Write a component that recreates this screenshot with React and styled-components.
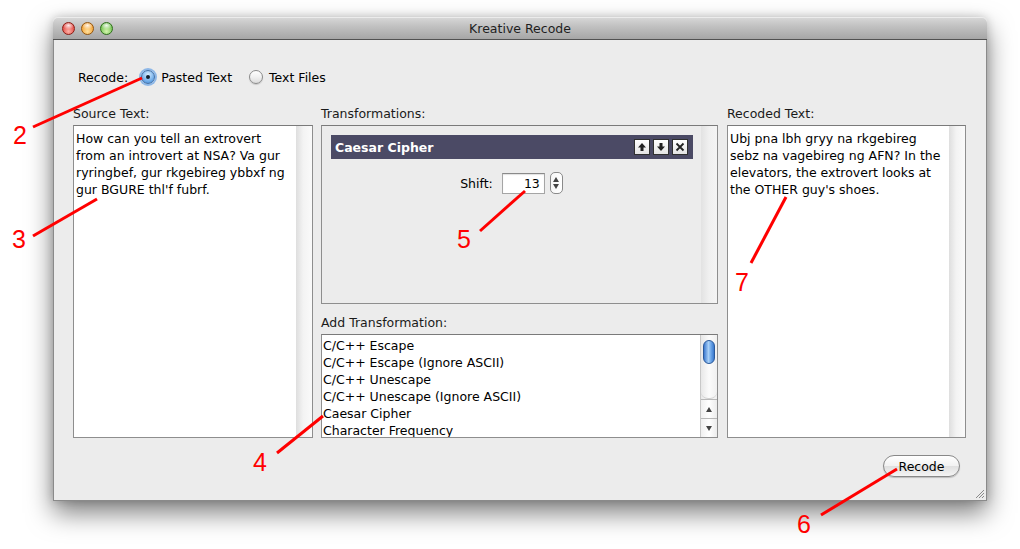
import React from 'react'
import styled, { createGlobalStyle } from 'styled-components'

const GlobalStyle = createGlobalStyle`
  html, body {
    margin: 0;
    padding: 0;
    background: #ffffff;
  }
  body {
    font-family: "DejaVu Sans", "Liberation Sans", sans-serif;
    font-size: 12.5px;
    color: #000;
  }
`

const Page = styled.div`
  position: relative;
  width: 1020px;
  height: 549px;
  overflow: hidden;
  padding: 17px 0 0 53px;
  box-sizing: border-box;
`

const Window = styled.div`
  width: 934px;
  height: 484px;
  display: flex;
  flex-direction: column;
  border-radius: 5px 5px 0 0;
  box-shadow: 0 12px 26px rgba(0, 0, 0, 0.5), 0 0 10px rgba(0, 0, 0, 0.18);
`

const TitleBar = styled.div`
  height: 22px;
  flex: none;
  display: flex;
  align-items: center;
  position: relative;
  border-radius: 5px 5px 0 0;
  background: linear-gradient(#d9d9d9, #c2c2c2 40%, #a6a6a6);
  border-bottom: 1px solid #515151;
  box-shadow: inset 0 1px 0 #ececec;
`

const Lights = styled.div`
  display: flex;
  gap: 6px;
  padding-left: 9px;
`

const lightColors = {
  red: ['#ffb3a8', '#e0443e', '#8c1d14'],
  yellow: ['#ffe1a0', '#f3a02f', '#93560f'],
  green: ['#d6f5b0', '#6cc04a', '#2f6e1c'],
}

const Light = styled.span`
  width: 13px;
  height: 13px;
  border-radius: 50%;
  box-sizing: border-box;
  border: 1px solid ${p => lightColors[p.$c][2]};
  background:
    radial-gradient(ellipse 6px 4px at 50% 22%, rgba(255,255,255,0.9), rgba(255,255,255,0) 100%),
    radial-gradient(circle at 50% 75%, ${p => lightColors[p.$c][0]}, ${p => lightColors[p.$c][1]} 70%);
`

const Title = styled.div`
  position: absolute;
  left: 0;
  right: 0;
  text-align: center;
  font-size: 12.5px;
  color: #1e1e1e;
  pointer-events: none;
`

const Body = styled.div`
  flex: 1;
  display: flex;
  flex-direction: column;
  position: relative;
  background: #ececec;
  border: 1px solid #8a8a8a;
  border-top: none;
  padding: 27px 20px 0 19px;
`

const RecodeRow = styled.div`
  display: flex;
  align-items: center;
  height: 20px;
  padding-left: 5px;
  margin-bottom: 19px;
`

const RowLabel = styled.span`
  margin-right: 13px;
`

const Radio = styled.span`
  width: 14px;
  height: 14px;
  box-sizing: border-box;
  border-radius: 50%;
  margin-right: 6px;
  display: inline-flex;
  align-items: center;
  justify-content: center;
  border: 1px solid ${p => (p.$checked ? '#3f6fa8' : '#8b8b8b')};
  background: ${p => (p.$checked
    ? 'radial-gradient(circle at 50% 30%, #d6ecff, #7fb6ec 55%, #3d86d6)'
    : 'linear-gradient(#ffffff, #f1f1f1 50%, #dcdcdc)')};
  box-shadow: ${p => (p.$checked ? '0 0 0 2px rgba(110, 165, 230, 0.75)' : '0 1px 1px rgba(0,0,0,0.15)')};
  &::after {
    content: '';
    display: ${p => (p.$checked ? 'block' : 'none')};
    width: 4px;
    height: 4px;
    border-radius: 50%;
    background: #102030;
  }
`

const RadioText = styled.span`
  margin-right: 17px;
`

const Columns = styled.div`
  display: grid;
  grid-template-columns: 240px 397px 1fr;
  column-gap: 8px;
`

const Column = styled.div`
  display: flex;
  flex-direction: column;
  margin-left: ${p => p.$shift || 0}px;
`

const Label = styled.div`
  height: 16px;
  line-height: 16px;
  margin-bottom: 3px;
  margin-top: ${p => p.$top || 0}px;
  color: #1a1a1a;
`

const Pane = styled.div`
  height: ${p => p.$h}px;
  box-sizing: border-box;
  border: 1px solid #8e8e8e;
  border-top-color: #7a7a7a;
  background: ${p => p.$bg || '#fff'};
  display: flex;
`

const PaneText = styled.div`
  flex: 1;
  padding: 4px 2px;
  line-height: 17px;
  white-space: pre-line;
  color: #000;
`

const ScrollTrack = styled.div`
  width: 16px;
  flex: none;
  background: ${p => (p.$gray
    ? 'linear-gradient(to right, #e2e2e2, #f0f0f0 50%, #f4f4f4)'
    : 'linear-gradient(to right, #dedede, #f3f3f3 45%, #fafafa)')};
`

const PanelArea = styled.div`
  flex: 1;
  display: flex;
  flex-direction: column;
`

const CipherHeader = styled.div`
  height: 24px;
  margin: 9px 8px 0 9px;
  background: #4b4a65;
  display: flex;
  align-items: center;
  justify-content: space-between;
  padding: 0 5px 0 4px;
`

const HeaderTitle = styled.span`
  color: #fff;
  font-weight: bold;
  font-size: 12.5px;
`

const HeaderButtons = styled.div`
  display: flex;
  gap: 3px;
`

const MiniButton = styled.span`
  width: 16px;
  height: 16px;
  box-sizing: border-box;
  border: 1px solid #303030;
  background: linear-gradient(#ffffff, #e4e4e4);
  display: inline-flex;
  align-items: center;
  justify-content: center;
`

const ShiftRow = styled.div`
  display: flex;
  align-items: center;
  justify-content: center;
  margin-top: 13px;
`

const ShiftInput = styled.div`
  width: 43px;
  height: 21px;
  box-sizing: border-box;
  margin-left: 9px;
  border: 1px solid #a5a5a5;
  border-top-color: #8a8a8a;
  background: #fff;
  box-shadow: inset 0 1px 1px rgba(0,0,0,0.12);
  text-align: right;
  padding-right: 4px;
  line-height: 19px;
`

const Stepper = styled.div`
  width: 13px;
  height: 22px;
  box-sizing: border-box;
  margin-left: 5px;
  border: 1px solid #8a8a8a;
  border-radius: 5px;
  background: linear-gradient(to right, #f7f7f7, #ffffff);
  display: flex;
  flex-direction: column;
  align-items: center;
  justify-content: space-around;
  padding: 3px 0;
`

const Tri = styled.span`
  width: 0;
  height: 0;
  border-left: 3px solid transparent;
  border-right: 3px solid transparent;
  ${p => (p.$down ? 'border-top: 5px solid #444;' : 'border-bottom: 5px solid #444;')}
`

const List = styled.div`
  flex: 1;
  padding: 2px 1px;
  line-height: 17px;
  overflow: hidden;
`

const ListItem = styled.div`
  white-space: nowrap;
  height: 17px;
`

const ListScroll = styled.div`
  width: 16px;
  flex: none;
  display: flex;
  flex-direction: column;
  border-left: 1px solid #c8c8c8;
  background: linear-gradient(to right, #e8e8e8, #fbfbfb 50%, #f0f0f0);
`

const ThumbTrack = styled.div`
  flex: 1;
  padding: 5px 2px 0 2px;
  border-radius: 0 0 7px 7px;
  border-bottom: 1px solid #d0d0d0;
`

const Thumb = styled.div`
  height: 22px;
  border-radius: 6px;
  border: 1px solid #2b5a9b;
  background: linear-gradient(to right, #3d7ad0, #a8d0f7 45%, #6ba5e8 70%, #3a78cd);
`

const ArrowBtn = styled.div`
  height: 18px;
  display: flex;
  align-items: center;
  justify-content: center;
  border-top: 1px solid #b8b8b8;
  background: linear-gradient(to right, #f0f0f0, #ffffff 50%, #ececec);
`

const Footer = styled.div`
  display: flex;
  justify-content: flex-end;
  padding-right: 6px;
  margin-top: 17px;
`

const RecodeButton = styled.button`
  width: 77px;
  height: 22px;
  border-radius: 11px;
  border: 1px solid #888;
  background: linear-gradient(#ffffff, #f2f2f2 50%, #e0e0e0 51%, #f4f4f4);
  box-shadow: 0 1px 1px rgba(0,0,0,0.2);
  font-family: "DejaVu Sans", "Liberation Sans", sans-serif;
  font-size: 12.5px;
  color: #000;
  padding: 0;
`

const Grip = styled.svg`
  position: absolute;
  right: 1px;
  bottom: 1px;
`

const Overlay = styled.svg`
  position: absolute;
  left: 0;
  top: 0;
  pointer-events: none;
`

const UpIcon = () => (
  <svg width="10" height="10" viewBox="0 0 10 10">
    <path d="M5 1 L9 5.5 L6.5 5.5 L6.5 9 L3.5 9 L3.5 5.5 L1 5.5 Z" fill="#222" />
  </svg>
)
const DownIcon = () => (
  <svg width="10" height="10" viewBox="0 0 10 10">
    <path d="M5 9 L9 4.5 L6.5 4.5 L6.5 1 L3.5 1 L3.5 4.5 L1 4.5 Z" fill="#222" />
  </svg>
)
const CloseIcon = () => (
  <svg width="10" height="10" viewBox="0 0 10 10">
    <path d="M1.5 1.5 L8.5 8.5 M8.5 1.5 L1.5 8.5" stroke="#222" strokeWidth="1.8" />
  </svg>
)

const sourceText = `How can you tell an extrovert
from an introvert at NSA? Va gur
ryringbef, gur rkgebireg ybbxf ng
gur BGURE thl'f fubrf.`

const recodedText = `Ubj pna lbh gryy na rkgebireg
sebz na vagebireg ng AFN? In the
elevators, the extrovert looks at
the OTHER guy's shoes.`

const transforms = [
  'C/C++ Escape',
  'C/C++ Escape (Ignore ASCII)',
  'C/C++ Unescape',
  'C/C++ Unescape (Ignore ASCII)',
  'Caesar Cipher',
  'Character Frequency',
]

const notes = [
  { n: '2', x: 13, y: 144, line: [33, 127, 142, 78] },
  { n: '3', x: 12, y: 248, line: [33, 236, 97, 199] },
  { n: '4', x: 253, y: 471, line: [277, 453, 323, 416] },
  { n: '5', x: 457, y: 248, line: [480, 231, 525, 191] },
  { n: '6', x: 797, y: 533, line: [821, 515, 897, 469] },
  { n: '7', x: 735, y: 291, line: [751, 263, 786, 197] },
]

export default function App() {
  return (
    <Page>
      <GlobalStyle />
      <Window>
        <TitleBar>
          <Lights>
            <Light $c="red" />
            <Light $c="yellow" />
            <Light $c="green" />
          </Lights>
          <Title>Kreative Recode</Title>
        </TitleBar>
        <Body>
          <RecodeRow>
            <RowLabel>Recode:</RowLabel>
            <Radio $checked />
            <RadioText>Pasted Text</RadioText>
            <Radio />
            <RadioText>Text Files</RadioText>
          </RecodeRow>

          <Columns>
            <Column>
              <Label>Source Text:</Label>
              <Pane $h={313}>
                <PaneText>{sourceText}</PaneText>
                <ScrollTrack />
              </Pane>
            </Column>

            <Column>
              <Label>Transformations:</Label>
              <Pane $h={179} $bg="#ececec">
                <PanelArea>
                  <CipherHeader>
                    <HeaderTitle>Caesar Cipher</HeaderTitle>
                    <HeaderButtons>
                      <MiniButton><UpIcon /></MiniButton>
                      <MiniButton><DownIcon /></MiniButton>
                      <MiniButton><CloseIcon /></MiniButton>
                    </HeaderButtons>
                  </CipherHeader>
                  <ShiftRow>
                    <span>Shift:</span>
                    <ShiftInput>13</ShiftInput>
                    <Stepper>
                      <Tri />
                      <Tri $down />
                    </Stepper>
                  </ShiftRow>
                </PanelArea>
                <ScrollTrack $gray />
              </Pane>
              <Label $top={11}>Add Transformation:</Label>
              <Pane $h={104}>
                <List>
                  {transforms.map(t => <ListItem key={t}>{t}</ListItem>)}
                </List>
                <ListScroll>
                  <ThumbTrack><Thumb /></ThumbTrack>
                  <ArrowBtn><Tri /></ArrowBtn>
                  <ArrowBtn><Tri $down /></ArrowBtn>
                </ListScroll>
              </Pane>
            </Column>

            <Column $shift={1}>
              <Label>Recoded Text:</Label>
              <Pane $h={313}>
                <PaneText>{recodedText}</PaneText>
                <ScrollTrack />
              </Pane>
            </Column>
          </Columns>

          <Footer>
            <RecodeButton>Recode</RecodeButton>
          </Footer>

          <Grip width="11" height="11" viewBox="0 0 11 11">
            <path d="M10 2 L2 10 M10 5 L5 10 M10 8 L8 10" stroke="#8a8a8a" strokeWidth="1" />
          </Grip>
        </Body>
      </Window>

      <Overlay width="1020" height="549" viewBox="0 0 1020 549">
        {notes.map(a => (
          <g key={a.n}>
            <line x1={a.line[0]} y1={a.line[1]} x2={a.line[2]} y2={a.line[3]}
              stroke="#ff0000" strokeWidth="3" />
            <text x={a.x} y={a.y} fill="#ff0000" fontSize="25"
              fontFamily="Liberation Sans, Arial, sans-serif">{a.n}</text>
          </g>
        ))}
      </Overlay>
    </Page>
  )
}
